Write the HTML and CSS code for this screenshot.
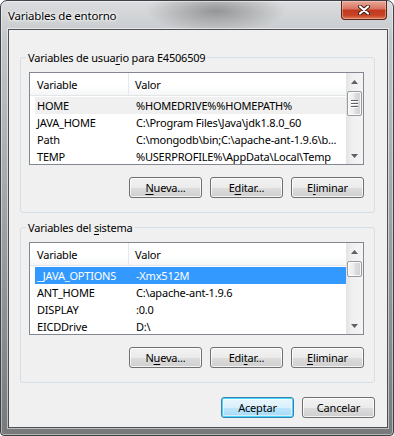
FILE: index.html
```html
<!DOCTYPE html>
<html lang="es">
<head>
    <meta charset="UTF-8">
    <meta name="viewport" content="width=device-width, initial-scale=1.0">
    <title>Variables de entorno</title>
    <link rel="stylesheet" href="styles.css">
</head>
<body>
    <div class="window">
        <div class="titlebar">
            <span class="title">Variables de entorno</span>
            <div class="close">
                <svg width="12" height="10" viewBox="0 0 12 10">
                    <path d="M2 1.5 L10 8.5 M10 1.5 L2 8.5" stroke="#3b1a12" stroke-width="4" stroke-linecap="round"/>
                    <path d="M2 1.5 L10 8.5 M10 1.5 L2 8.5" stroke="#fff" stroke-width="2.2" stroke-linecap="round"/>
                </svg>
            </div>
        </div>

        <div class="client">
            <!-- variables del usuario -->
            <div class="group group-user">
                <div class="group-title"><span>Variables de usua<u>r</u>io para E4506509</span></div>
                <div class="list">
                    <div class="list-body">
                        <div class="list-head">
                            <div class="col col-name">Variable</div>
                            <div class="col col-value">Valor</div>
                        </div>
                        <div class="row selected-idle">
                            <span class="cell">HOME</span>
                            <span class="cell">%HOMEDRIVE%%HOMEPATH%</span>
                        </div>
                        <div class="row">
                            <span class="cell">JAVA_HOME</span>
                            <span class="cell">C:\Program Files\Java\jdk1.8.0_60</span>
                        </div>
                        <div class="row">
                            <span class="cell">Path</span>
                            <span class="cell">C:\mongodb\bin;C:\apache-ant-1.9.6\b...</span>
                        </div>
                        <div class="row">
                            <span class="cell">TEMP</span>
                            <span class="cell">%USERPROFILE%\AppData\Local\Temp</span>
                        </div>
                    </div>
                    <div class="scrollbar">
                        <div class="arrow">
                            <svg width="7" height="4" viewBox="0 0 7 4"><path d="M0 4 L3.5 0 L7 4Z"/></svg>
                        </div>
                        <div class="thumb thumb-user">
                            <span class="grip"></span>
                            <span class="grip"></span>
                            <span class="grip"></span>
                        </div>
                        <div class="track"></div>
                        <div class="arrow">
                            <svg width="7" height="4" viewBox="0 0 7 4"><path d="M0 0 L7 0 L3.5 4Z"/></svg>
                        </div>
                    </div>
                </div>
                <div class="buttons">
                    <button class="btn"><u>N</u>ueva...</button>
                    <button class="btn">E<u>d</u>itar...</button>
                    <button class="btn">E<u>l</u>iminar</button>
                </div>
            </div>

            <!-- variables del sistema -->
            <div class="group group-system">
                <div class="group-title"><span>Variables del <u>s</u>istema</span></div>
                <div class="list">
                    <div class="list-body">
                        <div class="list-head">
                            <div class="col col-name">Variable</div>
                            <div class="col col-value">Valor</div>
                        </div>
                        <div class="row selected">
                            <span class="cell">_JAVA_OPTIONS</span>
                            <span class="cell">-Xmx512M</span>
                        </div>
                        <div class="row">
                            <span class="cell">ANT_HOME</span>
                            <span class="cell">C:\apache-ant-1.9.6</span>
                        </div>
                        <div class="row">
                            <span class="cell">DISPLAY</span>
                            <span class="cell">:0.0</span>
                        </div>
                        <div class="row">
                            <span class="cell">EICDDrive</span>
                            <span class="cell">D:\</span>
                        </div>
                    </div>
                    <div class="scrollbar">
                        <div class="arrow">
                            <svg width="7" height="4" viewBox="0 0 7 4"><path d="M0 4 L3.5 0 L7 4Z"/></svg>
                        </div>
                        <div class="thumb thumb-system"></div>
                        <div class="track"></div>
                        <div class="arrow">
                            <svg width="7" height="4" viewBox="0 0 7 4"><path d="M0 0 L7 0 L3.5 4Z"/></svg>
                        </div>
                    </div>
                </div>
                <div class="buttons">
                    <button class="btn">N<u>u</u>eva...</button>
                    <button class="btn">Edi<u>t</u>ar...</button>
                    <button class="btn"><u>E</u>liminar</button>
                </div>
            </div>

            <div class="buttons dialog-buttons">
                <button class="btn btn-default">Aceptar</button>
                <button class="btn">Cancelar</button>
            </div>
        </div>
    </div>
</body>
</html>
```

FILE: styles.css
```css
*{
    margin: 0;
    padding: 0;
    box-sizing: border-box;
}
body{
    background: #fff;
    font-family: "Segoe UI", "Noto Sans", sans-serif;
    font-size: 11px;
    letter-spacing: -0.2px;
    color: #000;
}
u{
    text-decoration-thickness: 1px;
    text-underline-offset: 2px;
}

/* marco de la ventana (aero) */
.window{
    width: 394px;
    height: 436px;
    border: 1px solid #3e4246;
    border-radius: 7px 7px 4px 4px;
    padding: 0 5px 7px 7px;
    display: flex;
    flex-direction: column;
    background:
        radial-gradient(ellipse 70px 22px at 215px 10px, rgba(70,70,70,.45), rgba(70,70,70,0)),
        linear-gradient(to bottom, #dadcde 0, #c3c6c9 40px, #a3a6a8 200px, #77797b 100%);
    box-shadow: inset 0 0 0 1px rgba(255,255,255,.45);
}
.titlebar{
    height: 28px;
    display: flex;
    justify-content: space-between;
    align-items: flex-start;
}
.title{
    margin-top: 7px;
    font-size: 11.5px;
    line-height: 15px;
    text-shadow: 0 0 6px #fff, 0 0 3px #fff, 0 0 2px #fff;
}
.close{
    width: 46px;
    height: 19px;
    margin-right: 1px;
    border: 1px solid #5a231a;
    border-top: none;
    border-radius: 0 0 4px 4px;
    display: flex;
    justify-content: center;
    align-items: center;
    background: linear-gradient(to bottom, #e9a99a 0, #d7725f 45%, #c0391f 50%, #c84428 80%, #dc7a55 100%);
    box-shadow: inset 0 0 0 1px rgba(255,210,190,.45);
}

.client{
    flex: 1;
    width: 380px;
    background: #f0f0f0;
    border: 1px solid #4d5155;
    box-shadow: 0 0 0 1px rgba(255,255,255,.5);
    padding: 0 0 0 11px;
}

/* cuadros de grupo */
.group{
    width: 355px;
    border: 1px solid #d5dfe5;
    border-radius: 3px;
    padding: 0 10px 14px 8px;
}
.group-user{
    margin-top: 27px;
}
.group-system{
    margin-top: 14px;
}
.group-title{
    height: 15px;
    line-height: 15px;
    margin: -8px 0 7px -3px;
    white-space: nowrap;
}
.group-title span{
    background: #f0f0f0;
    padding: 0 2px;
}

/* lista */
.list{
    width: 335px;
    height: 93px;
    border: 1px solid #828790;
    background: #fff;
    display: flex;
}
.list-body{
    width: 316px;
    overflow: hidden;
}
.list-head{
    height: 23px;
    display: flex;
    border-bottom: 1px solid #e5e5e5;
    background: linear-gradient(to bottom, #fff 0, #fff 55%, #f5f6f7 100%);
    margin-bottom: 1px;
}
.col{
    line-height: 23px;
    padding-left: 7px;
}
.col-name{
    width: 99px;
    border-right: 1px solid #e3e8ee;
}
.col-value{
    padding-left: 6px;
}
.row{
    height: 17px;
    margin-left: 5px;
    display: grid;
    grid-template-columns: 94px 217px;
    line-height: 17px;
    white-space: nowrap;
}
.cell{
    overflow: hidden;
    padding-left: 2px;
}
.cell + .cell{
    padding-left: 7px;
}
.selected-idle{
    background: #f0f0f0;
}
.selected{
    background: #3399ff;
    color: #fff;
}

/* barra de desplazamiento */
.scrollbar{
    width: 17px;
    flex-shrink: 0;
    display: flex;
    flex-direction: column;
    background: linear-gradient(to right, #e3e3e3 0, #f0f0f0 35%, #f4f4f4 100%);
}
.arrow{
    height: 17px;
    display: flex;
    justify-content: center;
    align-items: center;
}
.arrow svg{
    fill: #5f6063;
}
.track{
    flex: 1;
}
.thumb{
    margin: 1px 1px 0 1px;
    border: 1px solid #979aa0;
    border-radius: 2px;
    background: linear-gradient(to right, #f5f5f5 0, #ececec 45%, #dcdcdc 55%, #d2d2d2 100%);
    box-shadow: inset 0 0 0 1px rgba(255,255,255,.8);
    display: flex;
    flex-direction: column;
    justify-content: center;
    align-items: center;
    gap: 1px;
}
.thumb-user{
    height: 25px;
}
.thumb-system{
    height: 16px;
}
.grip{
    width: 7px;
    height: 2px;
    border-top: 1px solid #5d6066;
    border-bottom: 1px solid #fff;
}

/* botones */
.buttons{
    display: grid;
    grid-template-columns: repeat(3, 73px);
    justify-content: end;
    gap: 8px;
    margin-top: 12px;
}
.btn{
    height: 21px;
    font-family: inherit;
    font-size: 11px;
    letter-spacing: -0.2px;
    color: #000;
    border: 1px solid #707070;
    border-radius: 3px;
    background: linear-gradient(to bottom, #f2f2f2 0, #ebebeb 50%, #dddddd 51%, #cfcfcf 100%);
    box-shadow: inset 0 0 0 1px rgba(255,255,255,.75);
    line-height: 17px;
}
.dialog-buttons{
    width: 355px;
    grid-template-columns: repeat(2, 73px);
    margin-top: 14px;
}
.btn-default{
    border-color: #3c7fb1;
    box-shadow: inset 0 0 0 1px #48d8fb, inset 0 0 0 2px rgba(255,255,255,.5);
    background: linear-gradient(to bottom, #eaf6fd 0, #d9f0fc 50%, #bee6fd 51%, #a7d9f5 100%);
}
```
